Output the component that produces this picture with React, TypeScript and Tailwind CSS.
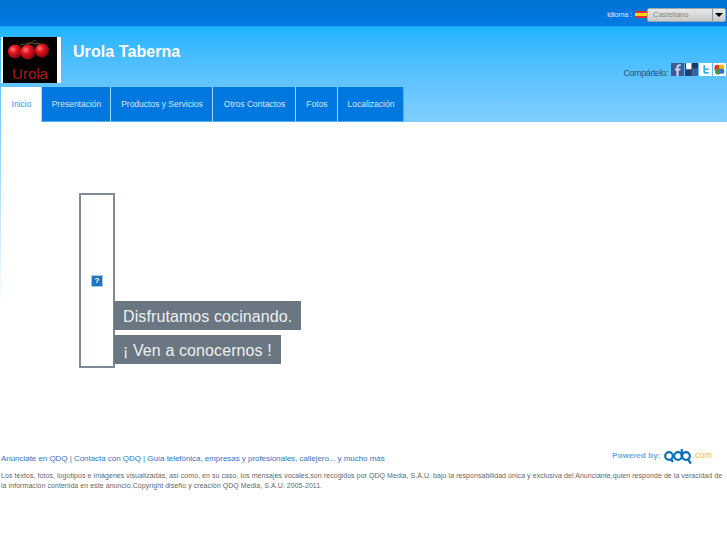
const font = "font-['Liberation_Sans',Arial,sans-serif]";

function Logo() {
  return (
    <div className="h-[46px] w-[60px] ml-px border-l-2 border-r-4 border-white bg-black flex flex-col items-center overflow-hidden">
      <svg width="54" height="24" viewBox="0 0 54 24" className="shrink-0">
        <defs>
          <radialGradient id="t" cx="35%" cy="35%" r="70%">
            <stop offset="0%" stopColor="#ff7a7a" />
            <stop offset="40%" stopColor="#e5121e" />
            <stop offset="100%" stopColor="#7a0710" />
          </radialGradient>
        </defs>
        <circle cx="12" cy="14.500" r="7" fill="url(#t)" />
        <circle cx="25" cy="15" r="7.500" fill="url(#t)" />
        <circle cx="39" cy="13.500" r="7" fill="url(#t)" />
        <path d="M17 8 L27 6 L38 7 M27 6 L33 3 M22 9 L27 6 M32 8 L35 5" stroke="#5a4a2a" strokeWidth="1" fill="none" />
      </svg>
      <div className={`${font} text-[15px] leading-[14px] text-[#b5141c] mt-[6px]`}>Urola</div>
    </div>
  );
}

function Flag() {
  return <div className="h-[3px] w-[12px] bg-[#ffd21f] border-y-2 border-[#e0332b] box-content" />;
}

function Share() {
  return (
    <div className="flex gap-px items-center">
      <svg width="13" height="13" viewBox="0 0 12 12"><rect width="12" height="12" fill="#3f5a96" /><path d="M7 12V7h1.600l.2-2H7V4c0-.6.2-1 1-1h1V1.200H7.600C6 1.200 5 2.200 5 3.700V5H3.600v2H5v5z" fill="#c9d3ea" /></svg>
      <svg width="13" height="13" viewBox="0 0 12 12"><rect width="12" height="12" fill="#1d3a66" /><rect x="1" width="5" height="6" fill="#fff" /><rect x="6" y="5" width="6" height="7" fill="#3e5f9b" /><rect y="6" width="6" height="6" fill="#233f6e" /></svg>
      <svg width="13" height="13" viewBox="0 0 12 12"><rect width="12" height="12" fill="#fff" /><path d="M4 2v6c0 1 .6 2 2 2h3V8.300H6.300C5.800 8.300 5.700 8 5.700 7.500V6.500H9V5H5.700V2z" fill="#35b3e8" /></svg>
      <svg width="13" height="13" viewBox="0 0 12 12"><rect width="12" height="12" fill="#fff" /><circle cx="4" cy="4.500" r="2.800" fill="#e0342c" /><circle cx="8" cy="3.800" r="2.500" fill="#f2b61c" /><circle cx="4.500" cy="8" r="2.600" fill="#3a9c3c" /><circle cx="8" cy="7.500" r="2.500" fill="#3a6fd8" /></svg>
    </div>
  );
}

function QdqLogo() {
  return (
    <svg width="28" height="18" viewBox="0 0 28 18" className="shrink-0">
      <g fill="none" stroke="#0b6fb8" strokeWidth="2.200">
        <circle cx="5" cy="9" r="3.800" />
        <path d="M7 12.500 L9 15" />
        <circle cx="14" cy="9" r="3.800" />
        <path d="M17.800 9 V2" />
        <circle cx="22" cy="9" r="3.800" />
        <path d="M24 12.500 L27 16.500" />
      </g>
    </svg>
  );
}

const tabs = ["Presentación", "Productos y Servicios", "Otros Contactos", "Fotos", "Localización"];
const tabW = ["w-[69px]", "w-[102px]", "w-[83px]", "w-[42px]", "w-[66px]"];

export default function App() {
  return (
    <div className={`${font} relative w-[727px] h-[545px] bg-white overflow-hidden`}>
      <div className="h-[27px] pt-[3px] bg-gradient-to-b from-[#0070d2] to-[#007ce4] border-b border-[#2a9df0] flex items-center justify-end">
        <span className="text-[7.500px] tracking-[-0.2px] text-[#dcecff] mr-[3px]">Idioma :</span>
        <Flag />
        <div className="h-[14px] w-[79px] mr-px rounded-[2px] border border-[#9aa6ad] bg-gradient-to-b from-[#e8e8e8] to-[#c9c9c9] flex items-center">
          <span className="flex-1 pl-[5px] text-[7.500px] text-[#7c8a93]">Castellano</span>
          <div className="w-[13px] h-full border-l border-[#8f9aa1] flex items-center justify-center">
            <div className="border-x-[4px] border-t-[4px] border-x-transparent border-t-black" />
          </div>
        </div>
      </div>
      <div className="h-[286px] bg-gradient-to-b from-[#1ab4ff] to-white">
        <div className="flex h-[46px] pt-0 relative top-[10px]">
          <Logo />
          <div className="ml-[12px] text-[16px] leading-[18px] mt-[6px] font-bold text-white tracking-[0.07px]">Urola Taberna</div>
          <div className="ml-auto flex items-end pb-[4px] pr-px gap-[3px] text-[#27566f] text-[9px] leading-[12px]">
            <span className="tracking-[-0.4px]">Compártelo:</span>
            <div className="mb-[3px]"><Share /></div>
          </div>
        </div>
        <nav className="flex h-[35px] mt-[14px] pl-px">
          <div className="w-[40px] pl-px bg-white flex items-center justify-center text-[8.500px] text-[#3c95e6]">Inicio</div>
          {tabs.map((t, i) => (
            <div key={t} className={`${tabW[i]} pl-px bg-[#0078e0] border-l border-[#a8d8fb] border-b border-b-[#55aef0] flex items-center justify-center text-[8.500px] text-[#d3e8fb] whitespace-nowrap`}>{t}</div>
          ))}
          <div className="w-px bg-[#55aef0]" />
        </nav>
        <main className="ml-px h-[191px] bg-white" />
      </div>
      <div className="absolute left-[79px] top-[193px] w-[36px] h-[175px] border-2 border-[#7e8b97] bg-white flex items-center justify-center">
        <div className="w-[12px] h-[12px] bg-[#1f74c4] border border-[#a9c9e8] text-white text-[8px] leading-[10px] text-center font-bold">?</div>
      </div>
      <div className="absolute left-[114px] top-[301px] flex flex-col items-start gap-[5px]">
        <div className="h-[29px] w-[187px] bg-[#6a7681] pl-[9px] text-[16px] leading-[31px] tracking-[0.1px] text-[#eef0f2]">Disfrutamos cocinando.</div>
        <div className="h-[29px] w-[167px] bg-[#6a7681] pl-[9px] text-[16px] leading-[31px] tracking-[0.1px] text-[#eef0f2]">¡ Ven a conocernos !</div>
      </div>
      <footer className="absolute inset-x-0 top-[446px]">
        <div className="flex items-start justify-between pl-px pr-[15px]">
          <div className="mt-[4px] text-[8px] leading-[18px] tracking-[-0.04px] text-[#2f78c8]">Anúnciate en QDQ | Contacta con QDQ | Guía telefónica, empresas y profesionales, callejero... y mucho más</div>
          <div className="flex items-center h-[18px] mt-px">
            <span className="text-[8px] font-bold tracking-[0.05px] text-[#6fa5dc] mr-[4px]">Powered by:</span>
            <QdqLogo />
            <span className="text-[9px] text-[#f5bc30]">.com</span>
          </div>
        </div>
        <p className="pl-px pr-[4px] mt-[3px] text-[7px] leading-[10px] tracking-[0.06px] text-[#666]">Los textos, fotos, logotipos e imágenes visualizadas, así como, en su caso, los mensajes vocales,son recogidos por QDQ Media, S.A.U. bajo la responsabilidad única y exclusiva del Anunciante,quien responde de la veracidad de la información contenida en este anuncio.Copyright diseño y creación QDQ Media, S.A.U. 2005-2011.</p>
      </footer>
    </div>
  );
}
